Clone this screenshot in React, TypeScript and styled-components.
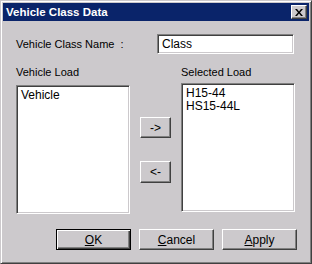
import styled, { createGlobalStyle } from "styled-components";

const face = "#ccc9cc";

const GlobalStyle = createGlobalStyle`
  html, body {
    margin: 0;
    padding: 0;
    background: ${face};
  }
  * {
    box-sizing: border-box;
  }
`;

const Window = styled.div`
  width: 312px;
  height: 264px;
  background: ${face};
  border: 1px solid;
  border-color: ${face} #404040 #404040 ${face};
  box-shadow: inset 1px 1px #fff, inset -1px -1px #808080;
  padding: 2px;
  display: flex;
  flex-direction: column;
  font-family: "Liberation Sans", Arial, sans-serif;
  font-size: 11px;
  color: #000;
`;

const TitleBar = styled.div`
  height: 18px;
  background: #0a246a;
  display: flex;
  align-items: center;
  justify-content: space-between;
  padding: 0 2px 0 3px;
`;

const Title = styled.span`
  color: #fff;
  font-weight: bold;
  font-size: 11.5px;
`;

const CloseButton = styled.button`
  width: 16px;
  height: 14px;
  padding: 0;
  background: ${face};
  border: 1px solid;
  border-color: #fff #404040 #404040 #fff;
  box-shadow: inset -1px -1px #808080;
  display: flex;
  align-items: center;
  justify-content: center;
`;

const Body = styled.div`
  flex: 1;
  display: flex;
  flex-direction: column;
  padding: 13px 12px 0 13px;
`;

const NameRow = styled.div`
  display: flex;
  align-items: center;
  justify-content: space-between;
  padding-right: 3px;
`;

const Label = styled.span`
  display: block;
  line-height: 13px;
  white-space: pre;
`;

const Sunken = styled.div`
  background: #fff;
  border: 1px solid;
  border-color: #808080 #fff #fff #808080;
  box-shadow: inset 1px 1px #404040, inset -1px -1px ${face};
`;

const TextBox = styled(Sunken)`
  width: 137px;
  height: 20px;
  padding: 3px 0 0 4px;
  font-size: 12px;
  line-height: 13px;
`;

const Lists = styled.div`
  display: grid;
  grid-template-columns: 114px 31px 114px;
  column-gap: 10px;
  margin-top: 12px;
`;

const Column = styled.div`
  display: flex;
  flex-direction: column;
`;

const ListBox = styled(Sunken)<{ $top: number }>`
  margin-top: ${(p) => p.$top}px;
  height: 129px;
  padding: 3px 0 0 3px;
  font-size: 12px;
  line-height: 13px;
`;

const Item = styled.div`
  padding-left: 1px;
`;

const MoveButtons = styled.div`
  display: flex;
  flex-direction: column;
  gap: 23px;
  padding-top: 51px;
`;

const Button = styled.button<{ $default?: boolean }>`
  height: 21px;
  padding: 0;
  font-family: inherit;
  font-size: 12px;
  color: #000;
  background: ${face};
  border: 1px solid;
  border-color: ${(p) => (p.$default ? "#000" : "#fff #404040 #404040 #fff")};
  box-shadow: ${(p) =>
    p.$default
      ? "inset 1px 1px #fff, inset -1px -1px #404040, inset -2px -2px #808080"
      : "inset -1px -1px #808080"};
`;

const MoveButton = styled(Button)`
  width: 31px;
  &:last-child {
    height: 22px;
  }
`;

const Footer = styled.div`
  display: flex;
  justify-content: flex-end;
  gap: 8px;
  margin-top: 15px;
`;

const DialogButton = styled(Button)`
  width: 75px;
`;

export default function App() {
  return (
    <>
      <GlobalStyle />
      <Window>
        <TitleBar>
          <Title>Vehicle Class Data</Title>
          <CloseButton aria-label="Close">
            <svg width="8" height="7" viewBox="0 0 8 7">
              <path d="M0 0h2l2 2.5L6 0h2L5 3.5 8 7H6L4 4.5 2 7H0l3-3.5z" fill="#000" />
            </svg>
          </CloseButton>
        </TitleBar>
        <Body>
          <NameRow>
            <Label>Vehicle Class Name  :</Label>
            <TextBox>Class</TextBox>
          </NameRow>
          <Lists>
            <Column>
              <Label>Vehicle Load</Label>
              <ListBox $top={6}>
                <Item>Vehicle</Item>
              </ListBox>
            </Column>
            <MoveButtons>
              <MoveButton>-&gt;</MoveButton>
              <MoveButton>&lt;-</MoveButton>
            </MoveButtons>
            <Column>
              <Label>Selected Load</Label>
              <ListBox $top={4}>
                <Item>H15-44</Item>
                <Item>HS15-44L</Item>
              </ListBox>
            </Column>
          </Lists>
          <Footer>
            <DialogButton $default>
              <u>O</u>K
            </DialogButton>
            <DialogButton>
              <u>C</u>ancel
            </DialogButton>
            <DialogButton>
              <u>A</u>pply
            </DialogButton>
          </Footer>
        </Body>
      </Window>
    </>
  );
}
